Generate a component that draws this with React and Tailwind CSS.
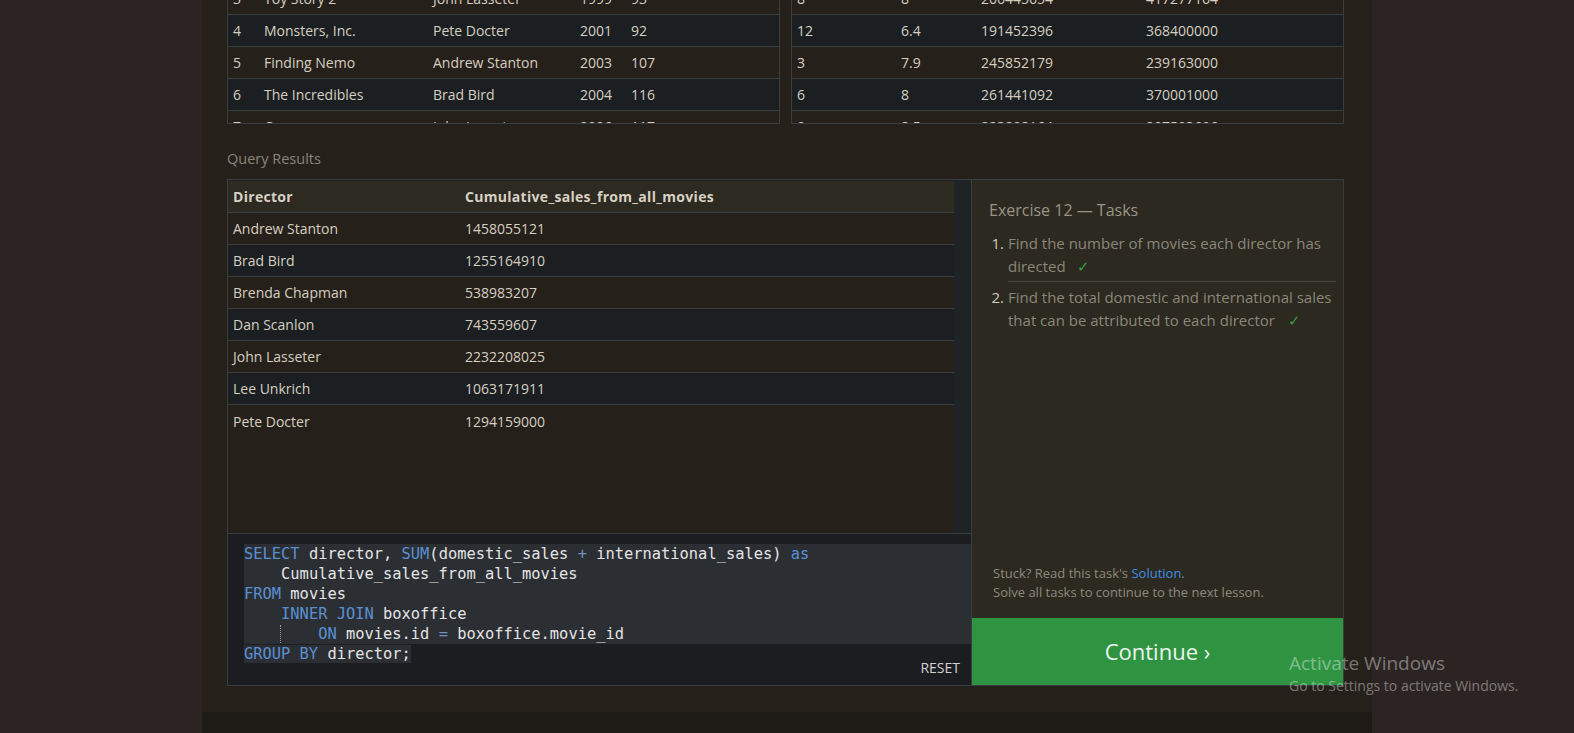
import React from "react";

const moviesRows = [
  ["3", "Toy Story 2", "John Lasseter", "1999", "93"],
  ["4", "Monsters, Inc.", "Pete Docter", "2001", "92"],
  ["5", "Finding Nemo", "Andrew Stanton", "2003", "107"],
  ["6", "The Incredibles", "Brad Bird", "2004", "116"],
  ["7", "Cars", "John Lasseter", "2006", "117"],
];

const boxofficeRows = [
  ["8", "8", "206445654", "417277164"],
  ["12", "6.4", "191452396", "368400000"],
  ["3", "7.9", "245852179", "239163000"],
  ["6", "8", "261441092", "370001000"],
  ["9", "8.5", "223808164", "297503696"],
];

const results = [
  ["Andrew Stanton", "1458055121"],
  ["Brad Bird", "1255164910"],
  ["Brenda Chapman", "538983207"],
  ["Dan Scanlon", "743559607"],
  ["John Lasseter", "2232208025"],
  ["Lee Unkrich", "1063171911"],
  ["Pete Docter", "1294159000"],
];

function TopTable({ rows, cols }) {
  return (
    <div className="h-[124px] overflow-hidden border-x border-b border-[#3a3d40]">
      <div className="-mt-[17px]">
        {rows.map((row, i) => (
          <div
            key={i}
            className={`grid ${cols} h-[32px] items-center border-b border-[#3a3d40] ${
              i % 2 === 1 ? "bg-[#1b1f22]" : ""
            }`}
          >
            {row.map((cell, j) => (
              <div key={j} className="pl-[5px] whitespace-nowrap">
                {cell}
              </div>
            ))}
          </div>
        ))}
      </div>
    </div>
  );
}

const kw = "text-[#5b8fd3]";
const op = "text-[#7090bd]";

function CodeEditor() {
  return (
    <div className="relative flex-1 border-t border-[#3a3d40] bg-[#1b1d20] pt-[10px] pl-[16px] font-['DejaVu_Sans_Mono',monospace] text-[15.4px] leading-[20px] text-[#e4e4e4] whitespace-pre">
      <div className="bg-[#2b2f34]">
        <span className={kw}>SELECT</span> director, <span className={kw}>SUM</span>(domestic_sales{" "}
        <span className={op}>+</span> international_sales) <span className={kw}>as</span>
      </div>
      <div className="bg-[#2b2f34]">{"    "}Cumulative_sales_from_all_movies</div>
      <div className="bg-[#2b2f34]">
        <span className={kw}>FROM</span> movies
      </div>
      <div className="bg-[#2b2f34]">
        {"    "}
        <span className={kw}>INNER JOIN</span> boxoffice
      </div>
      <div className="bg-[#2b2f34]">
        {"    "}
        <span className="-ml-px border-l border-dotted border-[#9a9a9a]">{"    "}</span>
        <span className={kw}>ON</span> movies.id <span className={op}>=</span> boxoffice.movie_id
      </div>
      <div>
        <span className="bg-[#2b2f34]">
          <span className={kw}>GROUP BY</span> director;
        </span>
      </div>
      <button className="absolute right-[11px] bottom-[7px] font-['Open_Sans',sans-serif] text-[14px] leading-[20px] text-[#d2d2d2]">
        RESET
      </button>
    </div>
  );
}

function TasksPanel() {
  return (
    <div className="w-[372px] flex flex-col border-l border-[#3a3d40] bg-[#2c2920]">
      <div className="flex-1 flex flex-col justify-between">
        <div className="pt-[18px] pl-[17px] pr-[7px]">
          <div className="text-[16px] leading-[24px] text-[#9a9487]">Exercise 12 — Tasks</div>
          <ol className="mt-[10px] text-[15px] leading-[23px] text-[#8b8679]">
            <li className="grid grid-cols-[19px_1fr]">
              <span className="text-right pr-[4px] text-[#cfc9bd]">1.</span>
              <div className="pb-[3px] border-b border-[#46463f]">
                Find the number of movies each director has
                <br />
                directed<span className="ml-[11px] text-[#3d9b45]">✓</span>
              </div>
            </li>
            <li className="grid grid-cols-[19px_1fr] pt-[4px]">
              <span className="text-right pr-[4px] text-[#cfc9bd]">2.</span>
              <div>
                Find the total domestic and international sales
                <br />
                that can be attributed to each director
                <span className="ml-[13px] text-[#3d9b45]">✓</span>
              </div>
            </li>
          </ol>
        </div>
        <div className="pl-[21px] pb-[16px] text-[13px] leading-[19px] text-[#8e897d]">
          <div>
            Stuck? Read this task's <span className="text-[#3f8fe6]">Solution</span>.
          </div>
          <div>Solve all tasks to continue to the next lesson.</div>
        </div>
      </div>
      <button className="h-[67px] bg-[#2e9442] text-[22px] text-[#eef5ee]">Continue ›</button>
    </div>
  );
}

export default function App() {
  return (
    <div className="relative min-h-[733px] bg-[#2c2422] overflow-hidden font-['Open_Sans',sans-serif] text-[14px] text-[#d6cfc1]">
      <div className="mx-auto w-[1170px] min-h-[733px] flex flex-col bg-[#26201a]">
        <div className="pl-[25px] pr-[28px] pb-[26px]">
          {/* tables from the lesson, scrolled */}
          <div className="grid grid-cols-2 gap-[11px]">
            <TopTable rows={moviesRows} cols="grid-cols-[31px_169px_147px_51px_1fr]" />
            <TopTable rows={boxofficeRows} cols="grid-cols-[104px_80px_165px_1fr]" />
          </div>

          <div className="mt-[25px] mb-[10px] text-[14.5px] leading-[20px] text-[#8a857a]">Query Results</div>

          <div className="h-[507px] flex border border-[#3a3d40]">
            <div className="flex-1 flex flex-col">
              <div className="h-[353px] flex">
                <div className="flex-1 pt-px">
                  <div className="grid grid-cols-[232px_1fr] h-[32px] items-center border-b border-[#3a3d40] bg-[#2d2a22] font-bold tracking-[0.3px] text-[#d8d0c2]">
                    <div className="pl-[5px]">Director</div>
                    <div className="pl-[5px]">Cumulative_sales_from_all_movies</div>
                  </div>
                  {results.map((r, i) => (
                    <div
                      key={r[0]}
                      className={`grid grid-cols-[232px_1fr] h-[32px] items-center ${
                        i < results.length - 1 ? "border-b border-[#3a3d40]" : ""
                      } ${i % 2 === 1 ? "bg-[#1b1f22]" : ""}`}
                    >
                      <div className="pl-[5px]">{r[0]}</div>
                      <div className="pl-[5px]">{r[1]}</div>
                    </div>
                  ))}
                </div>
                <div className="w-[17px] bg-[#1f2326]" />
              </div>
              <CodeEditor />
            </div>
            <TasksPanel />
          </div>
        </div>
        <div className="flex-1 bg-[#1e1b16]" />
      </div>

      {/* windows watermark */}
      <div className="absolute left-[1289px] top-[650px] pointer-events-none text-white/40">
        <div className="text-[19px] leading-[26px]">Activate Windows</div>
        <div className="text-[14px] leading-[20px]">Go to Settings to activate Windows.</div>
      </div>
    </div>
  );
}
